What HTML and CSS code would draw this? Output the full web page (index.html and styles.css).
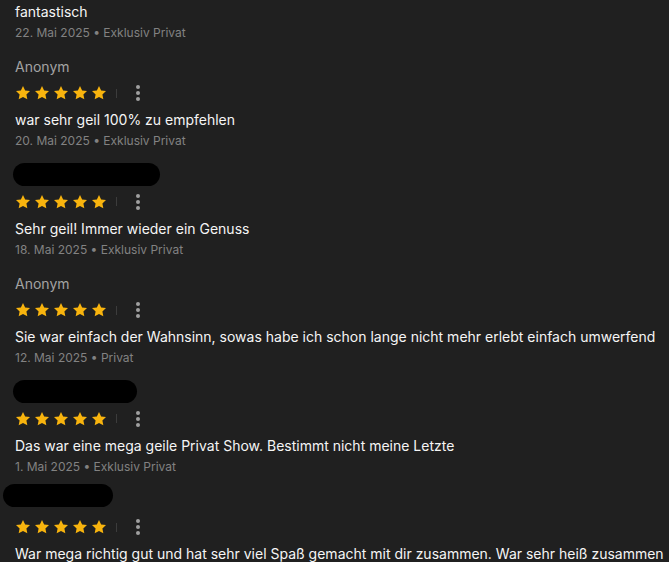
FILE: index.html
```html
<!DOCTYPE html>
<html lang="de">
  <head>
    <meta charset="UTF-8" />
    <meta name="viewport" content="width=device-width, initial-scale=1.0" />
    <title>Bewertungen</title>
    <link rel="stylesheet" href="styles.css">
  </head>
  <body>
    <svg width="0" height="0" style="position: absolute">
      <defs>
        <symbol id="star" viewBox="0 0 24 24">
          <path d="M12 1.5l3.2 6.7 7.3.9-5.4 5.1 1.4 7.3L12 17.9l-6.5 3.6 1.4-7.3-5.4-5.1 7.3-.9z" />
        </symbol>
      </defs>
    </svg>

    <div class="reviews">
      <!-- Erste Bewertung (abgeschnitten) -->
      <div class="review">
        <p class="review-text">fantastisch</p>
        <p class="review-meta">22. Mai 2025 &bull; Exklusiv Privat</p>
      </div>

      <div class="review">
        <div class="review-name">Anonym</div>
        <div class="review-rating">
          <span class="stars">
            <svg><use href="#star" /></svg><svg><use href="#star" /></svg><svg><use href="#star" /></svg><svg><use href="#star" /></svg><svg><use href="#star" /></svg>
          </span>
          <span class="divider"></span>
          <span class="more"><i></i><i></i><i></i></span>
        </div>
        <p class="review-text">war sehr geil 100% zu empfehlen</p>
        <p class="review-meta">20. Mai 2025 &bull; Exklusiv Privat</p>
      </div>

      <div class="review">
        <div class="review-name"><span class="redacted" style="width: 147px"></span></div>
        <div class="review-rating">
          <span class="stars">
            <svg><use href="#star" /></svg><svg><use href="#star" /></svg><svg><use href="#star" /></svg><svg><use href="#star" /></svg><svg><use href="#star" /></svg>
          </span>
          <span class="divider"></span>
          <span class="more"><i></i><i></i><i></i></span>
        </div>
        <p class="review-text">Sehr geil! Immer wieder ein Genuss</p>
        <p class="review-meta">18. Mai 2025 &bull; Exklusiv Privat</p>
      </div>

      <div class="review">
        <div class="review-name">Anonym</div>
        <div class="review-rating">
          <span class="stars">
            <svg><use href="#star" /></svg><svg><use href="#star" /></svg><svg><use href="#star" /></svg><svg><use href="#star" /></svg><svg><use href="#star" /></svg>
          </span>
          <span class="divider"></span>
          <span class="more"><i></i><i></i><i></i></span>
        </div>
        <p class="review-text">Sie war einfach der Wahnsinn, sowas habe ich schon lange nicht mehr erlebt einfach umwerfend</p>
        <p class="review-meta">12. Mai 2025 &bull; Privat</p>
      </div>

      <div class="review">
        <div class="review-name"><span class="redacted" style="width: 124px"></span></div>
        <div class="review-rating">
          <span class="stars">
            <svg><use href="#star" /></svg><svg><use href="#star" /></svg><svg><use href="#star" /></svg><svg><use href="#star" /></svg><svg><use href="#star" /></svg>
          </span>
          <span class="divider"></span>
          <span class="more"><i></i><i></i><i></i></span>
        </div>
        <p class="review-text">Das war eine mega geile Privat Show. Bestimmt nicht meine Letzte</p>
        <p class="review-meta">1. Mai 2025 &bull; Exklusiv Privat</p>
      </div>

      <div class="review">
        <div class="review-name"><span class="redacted shifted" style="width: 110px"></span></div>
        <div class="review-rating">
          <span class="stars">
            <svg><use href="#star" /></svg><svg><use href="#star" /></svg><svg><use href="#star" /></svg><svg><use href="#star" /></svg><svg><use href="#star" /></svg>
          </span>
          <span class="divider"></span>
          <span class="more"><i></i><i></i><i></i></span>
        </div>
        <p class="review-text">War mega richtig gut und hat sehr viel Spaß gemacht mit dir zusammen. War sehr heiß zusammen</p>
      </div>
    </div>
  </body>
</html>
```

FILE: styles.css
```css
* {
  margin: 0;
  padding: 0;
  box-sizing: border-box;
}

body {
  background-color: #202020;
  color: #f5f5f5;
  font-family: Inter, "Noto Sans", sans-serif;
  overflow: hidden;
}

.reviews {
  padding: 2px 10px 0 15px;
}

/* Bewertung */
.review {
  margin-bottom: 16.5px;
}

.review:first-child {
  margin-bottom: 16px;
}

.review-name {
  display: flex;
  align-items: flex-start;
  height: 20px;
  font-size: 14px;
  line-height: 20px;
  color: #a3a3a3;
}

/* Geschwärzter Name */
.redacted {
  display: block;
  flex-shrink: 0;
  height: 23px;
  margin: -2.5px 0 0 -2px;
  background-color: #000;
  border-radius: 12px;
}

.redacted.shifted {
  margin-left: -12px;
  margin-top: -7px;
}

.review-rating {
  display: flex;
  align-items: center;
  height: 20px;
  margin-top: 6px;
}

.stars {
  display: flex;
  gap: 3px;
}

.stars svg {
  width: 16px;
  height: 16px;
  fill: #f8b40e;
}

.divider {
  width: 1px;
  height: 9px;
  margin: 0 19px 0 9px;
  background-color: #3c3c3c;
}

.more {
  display: flex;
  flex-direction: column;
  gap: 2px;
}

.more i {
  width: 4px;
  height: 4px;
  border-radius: 50%;
  background-color: #a0a0a0;
}

.review-text {
  margin-top: 7px;
  font-size: 14px;
  line-height: 20px;
  white-space: nowrap;
}

.review:first-child .review-text {
  margin-top: 0;
}

.review-meta {
  margin-top: 3px;
  font-size: 12px;
  line-height: 16px;
  color: #828282;
}
```
